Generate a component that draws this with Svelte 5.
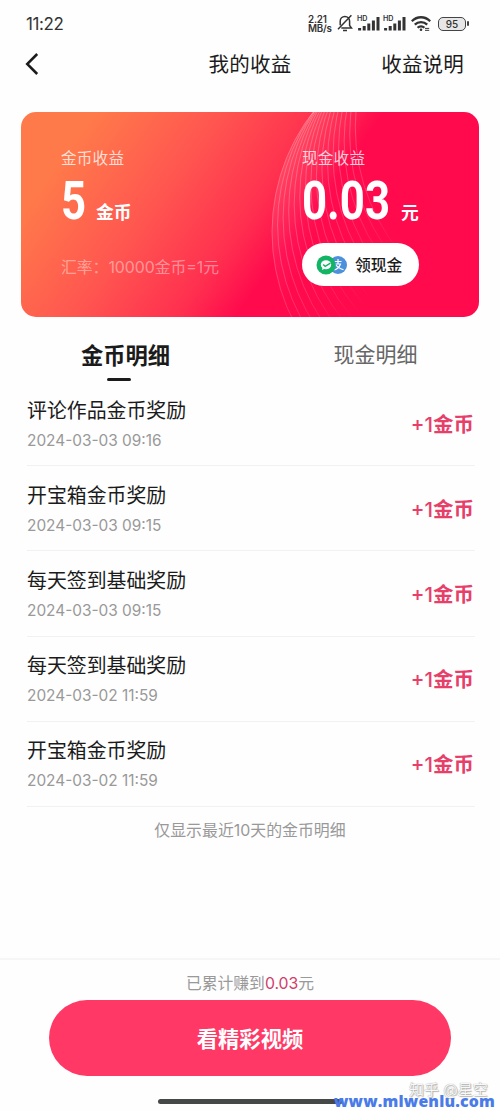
<script>
  const rows = [
    ['评论作品金币奖励', '2024-03-03 09:16'],
    ['开宝箱金币奖励', '2024-03-03 09:15'],
    ['每天签到基础奖励', '2024-03-03 09:15'],
    ['每天签到基础奖励', '2024-03-02 11:59'],
    ['开宝箱金币奖励', '2024-03-02 11:59']
  ];
  const arcs = Array.from({ length: 16 }, (_, i) => i);
</script>

<main>
  <header class="status">
    <span class="time">11:22</span>
    <div class="sys">
      <div class="rate"><span>2.21</span><span>MB/s</span></div>
      <svg class="bell" width="16" height="18" viewBox="0 0 16 18" fill="none" stroke="#333" stroke-width="1.5">
        <path d="M3.2 11.2V7.3c0-2.8 2-4.7 4.7-4.7s4.7 1.9 4.7 4.7v4.1l1.9 2.7H4.3M6 16.4h4M14.4 1.2 1 15.2" />
      </svg>
      {#each [0, 1] as n}
        <svg class="signal" width="23" height="18" viewBox="0 0 23 18">
          <text x="0" y="6.3" font-size="7.2" font-weight="600" fill="#333">HD</text>
          <path d="M2.6 15.5v-2.6M7.2 15.5v-4.5M11.8 15.5V8.6M16.4 15.5V5.4M21 15.5V2" stroke="#333" stroke-width="3" />
        </svg>
      {/each}
      <svg class="wifi" width="20" height="16" viewBox="0 0 20 16" fill="none" stroke="#333" stroke-width="2.3">
        <path d="M.8 5.3C6-.1 14-.1 19.2 5.3M3.8 8.6c3.4-3.4 9-3.4 12.4 0M6.6 11.7c1.9-1.9 4.9-1.9 6.8 0" />
        <circle cx="10" cy="13.8" r="1.3" fill="#333" stroke="none" />
        <path d="M14 12.4h4.2M14 14.3h4.2" stroke-width="1" />
      </svg>
      <div class="battery">95</div>
    </div>
  </header>

  <nav>
    <svg width="14" height="24" viewBox="0 0 14 24" fill="none" stroke="#1b1b1b" stroke-width="2.5">
      <path d="M12.2 2 2.2 12l10 10" />
    </svg>
    <h1>我的收益</h1>
    <span class="help">收益说明</span>
  </nav>

  <section class="card">
    <svg class="arcs" width="458" height="205" viewBox="0 0 458 205" fill="none">
      <defs>
        <linearGradient id="glow" gradientUnits="userSpaceOnUse" x1="275" x2="325" y1="30" y2="52">
          <stop offset="0" stop-color="#fff" stop-opacity=".1" />
          <stop offset="1" stop-color="#fff" stop-opacity="0" />
        </linearGradient>
        <linearGradient id="line" gradientUnits="userSpaceOnUse" x1="270" x2="375" y1="80" y2="150">
          <stop offset="0" stop-color="#fff" stop-opacity=".26" />
          <stop offset=".55" stop-color="#fff" stop-opacity=".17" />
          <stop offset="1" stop-color="#fff" stop-opacity="0" />
        </linearGradient>
      </defs>
      <circle cx="447" cy="120" r="196" fill="url(#glow)" />
      {#each arcs as i}
        <circle cx={447 + i * 5.7} cy={120 - i * 7} r={196 + i * 0.15} stroke="url(#line)" stroke-width=".9" />
      {/each}
    </svg>
    <div class="coin">
      <div class="label">金币收益</div>
      <div class="amount"><b class="five"><i>5</i></b><em>金币</em></div>
      <div class="exchange">汇率：10000金币=1元</div>
    </div>
    <div class="cash">
      <div class="label">现金收益</div>
      <div class="amount"><b class="dec"><i>0.03</i></b><em>元</em></div>
      <button class="claim">
        <svg width="32" height="20" viewBox="0 0 32 20" fill="none">
          <circle cx="22" cy="10" r="9" fill="#4b91dc" />
          <path d="M18.5 6.5h7M22 4v5M19.5 9h5c-1 3-3.3 5-6 6M20 10c1.5 2.3 4 3.6 7.5 4.8" stroke="#fff" stroke-width="1.2" />
          <circle cx="10" cy="10" r="9.5" fill="#12b563" />
          <ellipse cx="10" cy="9.8" rx="5.2" ry="4.5" fill="#fff" />
          <path d="M6.5 12.5 6 15l3-1.5z" fill="#fff" />
          <path d="m7.2 9.4 2 1.9 5.2-3.2" stroke="#12b563" stroke-width="1.4" />
        </svg>
        <span>领现金</span>
      </button>
    </div>
  </section>

  <div class="tabs">
    <div class="tab active">金币明细</div>
    <div class="tab">现金明细</div>
  </div>

  <ul>
    {#each rows as [title, date]}
      <li>
        <div class="info">
          <span class="title">{title}</span>
          <span class="date">{date}</span>
        </div>
        <span class="gain"><span>+1</span>金币</span>
      </li>
    {/each}
  </ul>
  <p class="note">仅显示最近10天的金币明细</p>

  <footer>
    <p>已累计赚到<span>0.03</span>元</p>
    <button class="watch">看精彩视频</button>
    <div class="home"></div>
  </footer>
  <div class="author">知乎 @星空</div>
  <div class="site">www.mlwenlu.com</div>
</main>

<style>
  :global(body) { margin: 0; background: #fefefe; }
  * { box-sizing: border-box; }
  main {
    position: relative;
    display: flex;
    flex-direction: column;
    width: 500px;
    height: 1111px;
    overflow: hidden;
    background: #fefefe;
    color: #1b1b1b;
    font-family: Inter, "Noto Sans CJK SC", sans-serif;
  }
  h1, p, ul { margin: 0; padding: 0; font-weight: 400; }
  button { border: 0; font-family: inherit; }
  .status {
    display: flex;
    justify-content: space-between;
    height: 45px;
    padding: 13px 34px 0 26px;
    color: #333;
  }
  .time { font-size: 17px; line-height: 22px; letter-spacing: -.4px; }
  .sys { display: flex; align-items: flex-start; height: 22px; }
  .rate { display: flex; flex-direction: column; width: 27px; padding-top: 2px; font-size: 9.8px; line-height: 9px; font-weight: 600; letter-spacing: -.2px; }
  .bell { margin: 1px 4px 0 2px; }
  .signal { margin: 2px 3px 0 0; font-family: Inter, sans-serif; }
  .wifi { margin: 3px 7px 0 2px; }
  .battery {
    position: relative;
    width: 28px;
    height: 14px;
    margin-top: 4px;
    border: 1.5px solid #444;
    border-radius: 5px;
    background: #e7e7e7;
    font-size: 10px;
    font-weight: 500;
    line-height: 12px;
    text-align: center;
  }
  .battery::after { content: ''; position: absolute; right: -4px; top: 3px; width: 2px; height: 5px; border-radius: 1px; background: #444; }
  nav {
    display: grid;
    grid-template-columns: 100px 1fr 100px;
    align-items: center;
    height: 40px;
    padding: 0 36px 0 25px;
  }
  nav svg { margin-top: -2px; }
  h1, .help { font-size: 20.5px; line-height: 30px; letter-spacing: .2px; white-space: nowrap; }
  h1 { text-align: center; padding-left: 11px; }
  .help { text-align: right; }
  .card {
    position: relative;
    display: grid;
    grid-template-columns: 241px 1fr;
    width: 458px;
    height: 205px;
    margin: 27px 0 0 21px;
    padding: 36px 0 0 40px;
    border-radius: 15px;
    overflow: hidden;
    color: #fff;
    background: linear-gradient(126deg, #ff7a4a 0%, #ff7a4a 12%, #ff5650 33%, #ff304f 50%, #ff0a4d 60%, #ff0a4c 100%);
  }
  .arcs { position: absolute; inset: 0; }
  .coin, .cash { position: relative; display: flex; flex-direction: column; align-items: flex-start; }
  .label { font-size: 15.6px; line-height: 22px; letter-spacing: .2px; color: rgba(255,255,255,.78); }
  .amount { display: flex; align-items: flex-end; height: 54px; margin-top: 4px; }
  .amount b { display: block; height: 54px; font: 700 54px/54px Roboto, sans-serif; }
  .amount i { display: inline-block; font-style: normal; transform: scaleX(.81); transform-origin: 0 50%; }
  .five { width: 35px; }
  .dec { width: 99px; }
  .amount em { font-style: normal; font-weight: 700; font-size: 17.8px; line-height: 26px; margin-bottom: 2px; }
  .exchange { margin-top: 29px; font-size: 15.8px; line-height: 22px; color: rgba(255,255,255,.43); }
  .claim {
    display: flex;
    align-items: center;
    width: 117px;
    height: 43px;
    margin-top: 15px;
    padding: 0 0 0 14px;
    gap: 7px;
    border-radius: 22px;
    background: #fff;
    color: #1b1b1b;
    font-size: 15.8px;
    font-weight: 500;
  }
  .tabs { display: grid; grid-template-columns: 1fr 1fr; height: 64px; padding: 23px 0 0; }
  .tab { position: relative; height: 30px; padding-left: 1px; font-size: 21px; line-height: 30px; text-align: center; color: #666; }
  .tab.active { font-size: 22.3px; line-height: 31px; font-weight: 700; color: #1b1b1b; }
  .tab.active::after { content: ''; position: absolute; left: 107px; bottom: -11px; width: 24px; height: 3px; border-radius: 2px; background: #1b1b1b; }
  ul { width: 448px; margin-left: 27px; list-style: none; }
  li { display: flex; align-items: center; justify-content: space-between; height: 85.2px; padding: 3px 1px 0 0; border-bottom: 1px solid #f1f1f1; }
  .info { display: flex; flex-direction: column; }
  .title { font-size: 19.9px; line-height: 30px; }
  .date { margin-top: 2px; font-size: 15.4px; line-height: 26px; color: #999; }
  .gain { padding-top: 0; font-size: 20.5px; line-height: 30px; font-weight: 700; color: #e63f6a; }
  .gain span { font-weight: 500; }
  .note { margin-top: 13px; text-align: center; font-size: 15.9px; line-height: 22px; color: #999; }
  footer { display: flex; flex-direction: column; align-items: center; height: 153px; margin-top: auto; border-top: 2px solid #f6f6f6; }
  footer p { margin-top: 12px; font-size: 15.8px; line-height: 24px; color: #999; }
  footer p span { color: #d13c6b; }
  .watch { width: 402px; height: 76px; margin-top: 4px; padding: 0 0 2px; border-radius: 38px; background: #ff3866; color: #fff; font-size: 21.3px; font-weight: 700; }
  .home { width: 185px; height: 5px; margin-top: 23px; border-radius: 3px; background: #444947; }
  .author { position: absolute; left: 409px; top: 1079px; font-size: 15px; line-height: 22px; color: #f8f8f8; text-shadow: 0 0 1px #888, 1px 1px 1px #bbb; white-space: nowrap; }
  .site { position: absolute; left: 334px; top: 1090px; font: 800 15.8px/22px "Open Sans", sans-serif; letter-spacing: .2px; color: #4a7be8; white-space: nowrap; }
</style>
